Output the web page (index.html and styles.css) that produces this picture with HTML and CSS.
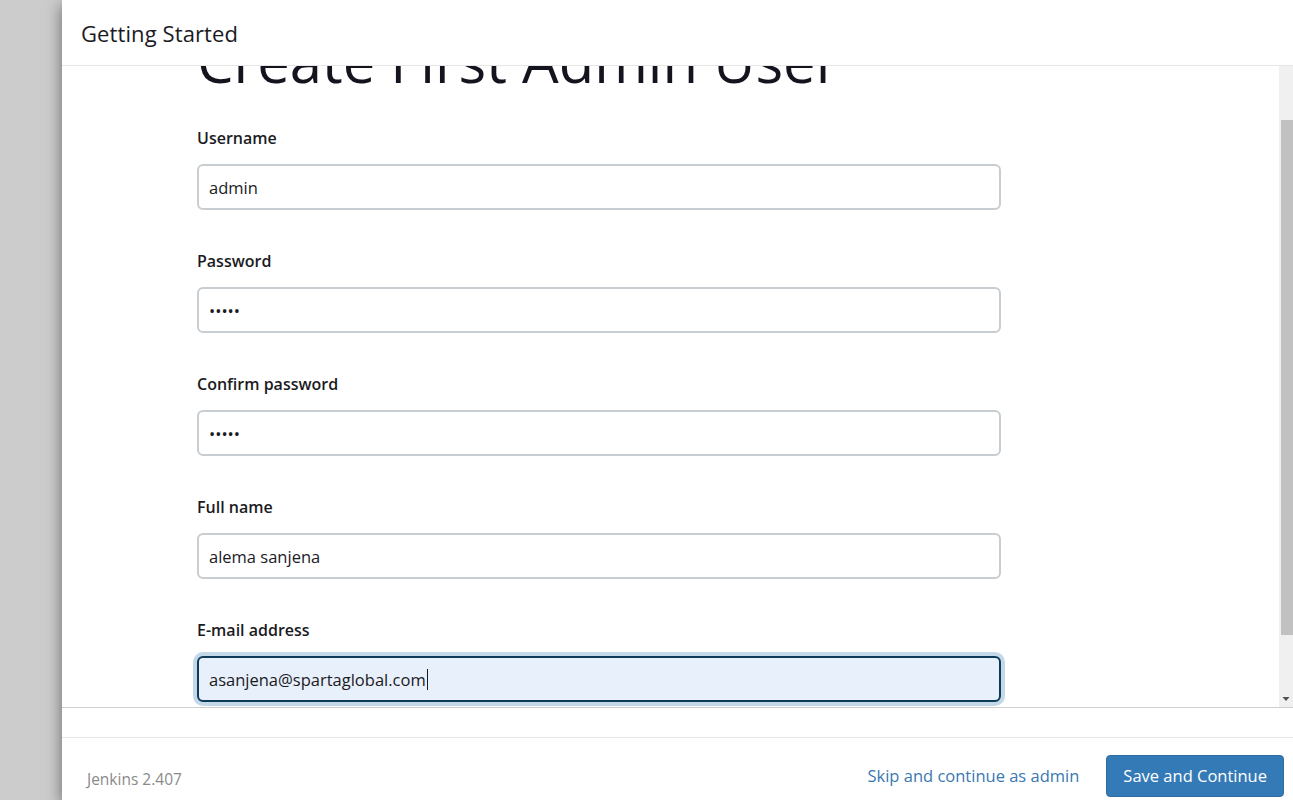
FILE: index.html
```html
<!DOCTYPE html>
<html lang="en">
<head>
<meta charset="utf-8">
<title>Getting Started</title>
<link rel="stylesheet" href="styles.css">
</head>
<body>
<div class="backdrop">
  <div class="dialog">
    <header class="dialog-header">
      <h4 class="dialog-title">Getting Started</h4>
    </header>
    <div class="dialog-main">
      <div class="dialog-body" id="body">
        <div class="form-wrap">
          <h1 class="page-title">Create First Admin User</h1>
          <div class="field">
            <label class="field-label">Username</label>
            <input class="field-input" type="text" value="admin">
          </div>
          <div class="field">
            <label class="field-label">Password</label>
            <input class="field-input" type="password" value="admin">
          </div>
          <div class="field">
            <label class="field-label">Confirm password</label>
            <input class="field-input" type="password" value="admin">
          </div>
          <div class="field">
            <label class="field-label">Full name</label>
            <input class="field-input" type="text" value="alema sanjena">
          </div>
          <div class="field">
            <label class="field-label">E-mail address</label>
            <div class="input-focus-wrap">
              <span class="focus-text">asanjena@spartaglobal.com</span><span class="caret"></span>
            </div>
          </div>
        </div>
      </div>
      <div class="scrollbar" aria-hidden="true">
        <div class="scroll-thumb"></div>
        <div class="scroll-fill"></div>
        <div class="scroll-arrow">
          <svg width="14" height="17" viewBox="0 0 14 17"><path d="M3.5 7h7l-3.5 4z" fill="#505050"/></svg>
        </div>
      </div>
    </div>
    <div class="dialog-spacer"></div>
    <footer class="dialog-footer">
      <span class="version">Jenkins 2.407</span>
      <div class="actions">
        <a class="skip-link" href="#">Skip and continue as admin</a>
        <button class="btn-primary" type="button">Save and Continue</button>
      </div>
    </footer>
  </div>
</div>
<script src="script.js"></script>
</body>
</html>
```

FILE: styles.css
```css
* { box-sizing: border-box; }
html, body {
  margin: 0;
  padding: 0;
  height: 100%;
  overflow: hidden;
}
body {
  font-family: "Open Sans", "Noto Sans", sans-serif;
  color: #1b1b1f;
  background: #cccccc;
}
.backdrop {
  height: 100%;
  padding-left: 62px;
}
.dialog {
  height: 100%;
  background: #fff;
  display: flex;
  flex-direction: column;
  box-shadow: 0 5px 15px rgba(0, 0, 0, 0.5);
}
.dialog-header {
  height: 66px;
  flex: 0 0 66px;
  border-bottom: 1px solid #e5e5e5;
  display: flex;
  align-items: center;
  padding-left: 19px;
}
.dialog-title {
  margin: 0;
  font-size: 22px;
  font-weight: 500;
  color: #1b1b1f;
  letter-spacing: 0.1px;
}
.dialog-main {
  flex: 0 0 642px;
  height: 642px;
  display: flex;
  border-bottom: 1px solid #cfcfcf;
}
.dialog-body {
  flex: 1 1 auto;
  height: 641px;
  overflow: hidden;
}
.scrollbar {
  flex: 0 0 14px;
  width: 14px;
  background: #f0f0f0;
  display: flex;
  flex-direction: column;
}
.scroll-thumb {
  margin-top: 54px;
  margin-left: 2px;
  height: 515px;
  background: #c1c1c1;
}
.scroll-fill { flex: 1 1 auto; }
.scroll-arrow {
  height: 17px;
  display: flex;
}
.form-wrap {
  padding: 30px 0 71px 135px;
  width: 941px;
}
.page-title {
  margin: 0 0 30px;
  font-size: 58px;
  line-height: 70px;
  font-weight: 500;
  color: #14141f;
  white-space: nowrap;
}
.field {
  display: flex;
  flex-direction: column;
  margin-bottom: 39px;
}
.field:last-child { margin-bottom: 0; }
.field-label {
  font-size: 16px;
  line-height: 24px;
  font-weight: 600;
  color: #1b1b1f;
  margin-bottom: 14px;
}
.field-input {
  width: 804px;
  height: 46px;
  border: 2px solid #c7cdd1;
  border-radius: 6px;
  padding: 0 10px;
  font-family: inherit;
  font-size: 16.5px;
  color: #1b1b1f;
  background: #fff;
  outline: none;
}
.input-focus-wrap {
  width: 804px;
  height: 46px;
  border: 2px solid #0d3b59;
  border-radius: 6px;
  padding: 0 10px;
  background: #e8f0fb;
  box-shadow: 0 0 0 4px #c3d9e8;
  display: flex;
  align-items: center;
  font-size: 16.5px;
  color: #1b1b1f;
}
.caret {
  width: 1px;
  height: 21px;
  background: #1b1b1f;
  margin-left: 1px;
}
.dialog-spacer {
  height: 30px;
  flex: 0 0 30px;
  border-bottom: 1px solid #e5e5e5;
}
.dialog-footer {
  flex: 1 1 auto;
  display: flex;
  align-items: center;
  justify-content: space-between;
  padding: 13px 9px 0 25px;
}
.version {
  font-size: 15.5px;
  color: #8a8a8a;
  padding-top: 6px;
}
.actions {
  display: flex;
  align-items: center;
  gap: 27px;
}
.skip-link {
  font-size: 16.5px;
  color: #3a78b0;
  text-decoration: none;
}
.btn-primary {
  height: 42px;
  padding: 0 16px;
  border: 1px solid #2e6da4;
  border-radius: 4px;
  background: #337ab7;
  color: #fff;
  font-family: inherit;
  font-size: 16.5px;
}
```

FILE: script.js
```js
document.getElementById('body').scrollTop = 70;
```
